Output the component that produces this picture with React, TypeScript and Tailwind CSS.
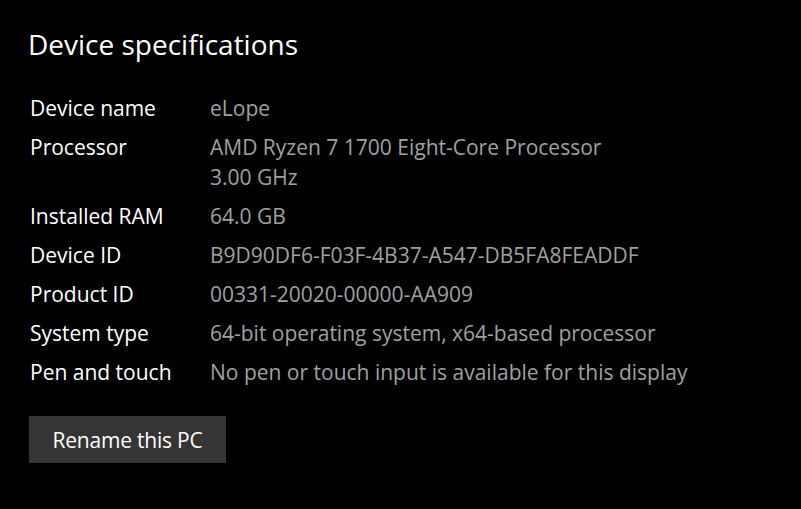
const specs: [string, string[]][] = [
  ['Device name', ['eLope']],
  ['Processor', ['AMD Ryzen 7 1700 Eight-Core Processor', '3.00 GHz']],
  ['Installed RAM', ['64.0 GB']],
  ['Device ID', ['B9D90DF6-F03F-4B37-A547-DB5FA8FEADDF']],
  ['Product ID', ['00331-20020-00000-AA909']],
  ['System type', ['64-bit operating system, x64-based processor']],
  ['Pen and touch', ['No pen or touch input is available for this display']],
];

export default function App() {
  return (
    <div className="h-[509px] w-[801px] overflow-hidden bg-black pl-[28px] pt-[25px] font-['Segoe_UI','Open_Sans',sans-serif] text-white">
      <h1 className="text-[28px] leading-[38px] font-normal">Device specifications</h1>
      <div className="mt-[30px] flex flex-col gap-[9px] pl-[2px]">
        {specs.map(([label, lines]) => (
          <div key={label} className="flex text-[21px] leading-[30px]">
            <div className="w-[180px] shrink-0">{label}</div>
            <div className="text-[#a0a0a0]">
              {lines.map((l) => (
                <div key={l}>{l}</div>
              ))}
            </div>
          </div>
        ))}
      </div>
      <button className="mt-[29px] ml-[1px] h-[47px] w-[197px] bg-[#353535] pt-[3px] text-[21px] text-white tracking-[-0.2px]">
        Rename this PC
      </button>
    </div>
  );
}
